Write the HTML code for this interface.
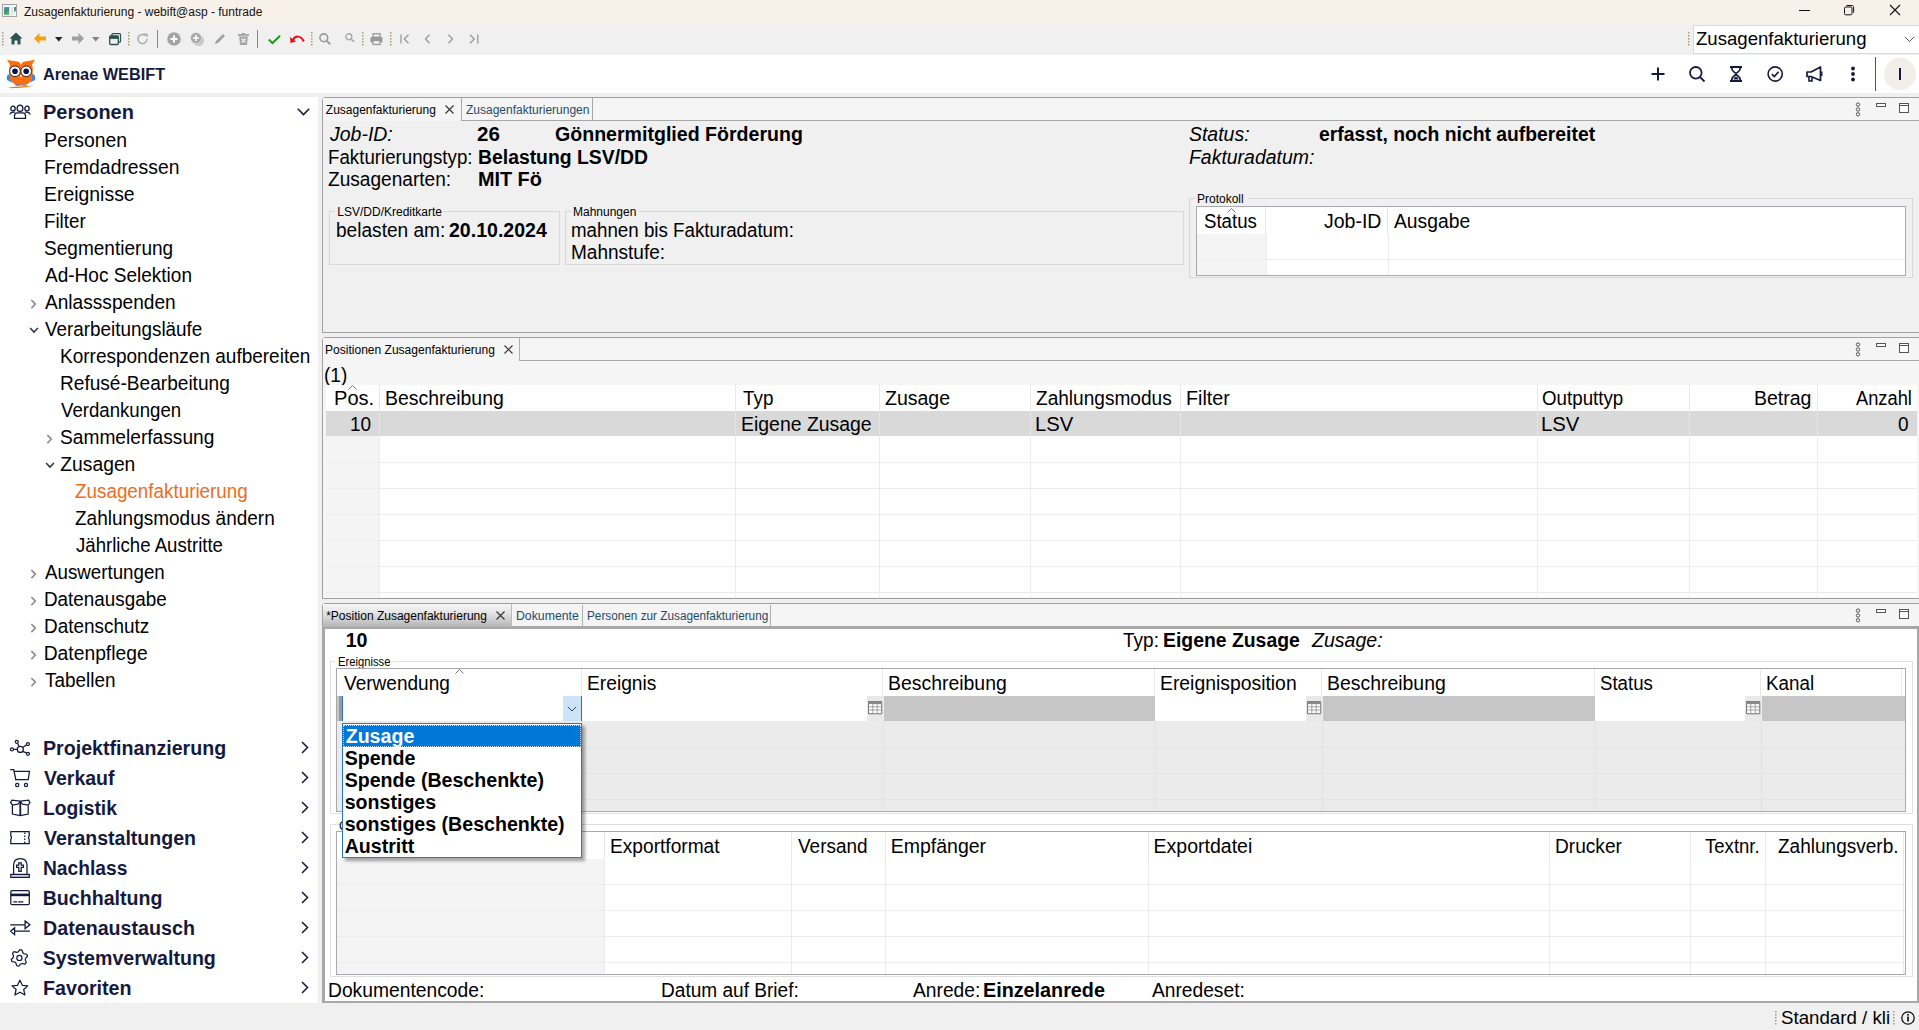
<!DOCTYPE html>
<html><head><meta charset="utf-8"><title>Zusagenfakturierung</title>
<style>
html,body{margin:0;padding:0;width:1919px;height:1030px;overflow:hidden;background:#f0f0f0;font-family:"Liberation Sans",sans-serif;}
.r{position:absolute;box-sizing:border-box;}
svg.r{overflow:visible;}
.t{position:absolute;white-space:nowrap;}
</style></head><body>
<div class="r" style="left:0px;top:0px;width:1919px;height:23px;background:#f8f1ea"></div>
<svg class="r" style="left:2px;top:4px;" width="15" height="13" viewBox="0 0 15 13"><defs><linearGradient id="ig" x1="0" y1="0" x2="0.4" y2="1"><stop offset="0" stop-color="#6d93c4"/><stop offset="0.5" stop-color="#3f8a86"/><stop offset="1" stop-color="#5cb060"/></linearGradient></defs><rect x="0.5" y="0.5" width="14" height="12" fill="#f6f7f9" stroke="#9ea3aa"/><rect x="2" y="3" width="5.2" height="7.8" fill="url(#ig)"/><rect x="9" y="3" width="2.2" height="7.8" fill="#e2e2e2"/><rect x="12" y="3" width="2" height="4.5" fill="url(#ig)"/></svg>
<div class="t" style="left:24.00px;top:6.00px;font-size:12.0px;line-height:12.0px;color:#111;">Zusagenfakturierung - webift@asp - funtrade</div>
<div class="r" style="left:1799px;top:10px;width:11px;height:1px;background:#111"></div>
<svg class="r" style="left:1843px;top:4px;" width="12" height="12" viewBox="0 0 12 12"><rect x="1.5" y="3" width="7.5" height="7.8" rx="1.2" fill="none" stroke="#111"/><path d="M3.6 1.5 H9 C10 1.5 10.6 2.2 10.6 3.2 V8.6" fill="none" stroke="#111"/></svg>
<svg class="r" style="left:1889px;top:4px;" width="12" height="12" viewBox="0 0 12 12"><path d="M1 1 L11 11 M11 1 L1 11" stroke="#111" stroke-width="1.1"/></svg>
<div class="r" style="left:0px;top:23px;width:1919px;height:32px;background:#f0f0f0"></div>
<svg class="r" style="left:2px;top:32px;" width="2" height="14" viewBox="0 0 2 14"><rect x="0" y="0" width="1.5" height="1.5" fill="#a89878"/><rect x="0" y="3" width="1.5" height="1.5" fill="#a89878"/><rect x="0" y="6" width="1.5" height="1.5" fill="#a89878"/><rect x="0" y="9" width="1.5" height="1.5" fill="#a89878"/><rect x="0" y="12" width="1.5" height="1.5" fill="#a89878"/></svg>
<svg class="r" style="left:9px;top:32px;" width="14" height="13" viewBox="0 0 14 13"><path d="M7 0.5 L13.5 6.5 L11.5 6.5 L11.5 12.5 L8.5 12.5 L8.5 8.5 L5.5 8.5 L5.5 12.5 L2.5 12.5 L2.5 6.5 L0.5 6.5 Z" fill="#2f5252"/></svg>
<svg class="r" style="left:34px;top:33px;" width="12" height="11" viewBox="0 0 12 11"><path d="M0 5.5 L5.5 0 L5.5 3.5 L12 3.5 L12 7.5 L5.5 7.5 L5.5 11 Z" fill="#f5a012"/></svg>
<svg class="r" style="left:55px;top:37px;" width="8" height="5" viewBox="0 0 8 5"><path d="M0 0 H7.5 L3.75 4.5 Z" fill="#222"/></svg>
<svg class="r" style="left:72px;top:33px;" width="12" height="11" viewBox="0 0 12 11"><path d="M12 5.5 L6.5 0 L6.5 3.5 L0 3.5 L0 7.5 L6.5 7.5 L6.5 11 Z" fill="#a0a0a0"/></svg>
<svg class="r" style="left:92px;top:37px;" width="8" height="5" viewBox="0 0 8 5"><path d="M0 0 H7.5 L3.75 4.5 Z" fill="#808080"/></svg>
<svg class="r" style="left:109px;top:33px;" width="14" height="14" viewBox="0 0 14 14"><rect x="2.9" y="0.6" width="8.6" height="8.6" rx="1" fill="none" stroke="#2f4f4f" stroke-width="1.2"/><rect x="0.7" y="2.9" width="8.6" height="8.6" rx="1" fill="#f0f0f0" stroke="#2f4f4f" stroke-width="1.3"/><rect x="0.7" y="2.9" width="8.6" height="3" fill="#2f4f4f"/></svg>
<svg class="r" style="left:128px;top:32px;" width="2" height="14" viewBox="0 0 2 14"><rect x="0" y="0" width="1.5" height="1.5" fill="#a89878"/><rect x="0" y="3" width="1.5" height="1.5" fill="#a89878"/><rect x="0" y="6" width="1.5" height="1.5" fill="#a89878"/><rect x="0" y="9" width="1.5" height="1.5" fill="#a89878"/><rect x="0" y="12" width="1.5" height="1.5" fill="#a89878"/></svg>
<svg class="r" style="left:137px;top:33px;" width="12" height="12" viewBox="0 0 12 12"><path d="M10 6 A4.5 4.5 0 1 1 8.2 2.4" fill="none" stroke="#a8a8a8" stroke-width="1.5"/><path d="M6.5 0.5 L10.5 0.5 L10.5 4.5 Z" fill="#a8a8a8"/></svg>
<div class="r" style="left:157px;top:30px;width:1px;height:18px;background:#888"></div>
<svg class="r" style="left:167px;top:32px;" width="14" height="14" viewBox="0 0 14 14"><circle cx="7" cy="7" r="6.8" fill="#a4a4a4"/><path d="M7 3.5 V10.5 M3.5 7 H10.5" stroke="#fff" stroke-width="2"/></svg>
<svg class="r" style="left:190px;top:32px;" width="14" height="14" viewBox="0 0 14 14"><circle cx="8.5" cy="8.5" r="5.5" fill="#c8c8c8"/><circle cx="6" cy="6" r="5.5" fill="#a8a8a8" stroke="#f0f0f0" stroke-width="0.6"/><path d="M6 3 V9 M3 6 H9" stroke="#fff" stroke-width="1.6"/></svg>
<svg class="r" style="left:214px;top:33px;" width="12" height="12" viewBox="0 0 12 12"><path d="M1 11 L2 8 L9 1 L11 3 L4 10 Z" fill="#a0a0a0"/></svg>
<svg class="r" style="left:238px;top:33px;" width="11" height="12" viewBox="0 0 11 12"><rect x="0" y="1" width="11" height="1.8" fill="#a4a4a4"/><rect x="4" y="0" width="3" height="1.5" fill="#a4a4a4"/><path d="M1.2 3.5 H9.8 L9 12 H2 Z" fill="#a4a4a4"/><path d="M3.5 5.5 L7.5 9.5 M7.5 5.5 L3.5 9.5" stroke="#f0f0f0" stroke-width="1.2"/></svg>
<div class="r" style="left:257px;top:30px;width:1px;height:18px;background:#888"></div>
<svg class="r" style="left:268px;top:35px;" width="13" height="9" viewBox="0 0 13 9"><path d="M0.8 4.5 L4.5 8 L12 0.8" fill="none" stroke="#1e9a1e" stroke-width="2"/></svg>
<svg class="r" style="left:290px;top:34px;" width="15" height="10" viewBox="0 0 15 10"><path d="M3 6 C5 1.5 11 1 13.8 7.5" fill="none" stroke="#e81010" stroke-width="2"/><path d="M0 3 L0.5 9 L6 7.5 Z" fill="#e81010"/></svg>
<svg class="r" style="left:311px;top:32px;" width="2" height="14" viewBox="0 0 2 14"><rect x="0" y="0" width="1.5" height="1.5" fill="#a89878"/><rect x="0" y="3" width="1.5" height="1.5" fill="#a89878"/><rect x="0" y="6" width="1.5" height="1.5" fill="#a89878"/><rect x="0" y="9" width="1.5" height="1.5" fill="#a89878"/><rect x="0" y="12" width="1.5" height="1.5" fill="#a89878"/></svg>
<svg class="r" style="left:319px;top:33px;" width="12" height="12" viewBox="0 0 12 12"><circle cx="4.8" cy="4.8" r="3.9" fill="none" stroke="#999" stroke-width="1.6"/><path d="M7.6 7.6 L11.3 11.3" stroke="#999" stroke-width="1.8"/></svg>
<svg class="r" style="left:345px;top:33px;" width="10" height="9" viewBox="0 0 10 9"><circle cx="3.8" cy="3.8" r="3" fill="none" stroke="#aaa" stroke-width="1.4"/><path d="M6 6 L9.3 8.8" stroke="#aaa" stroke-width="1.6"/></svg>
<svg class="r" style="left:362px;top:32px;" width="2" height="14" viewBox="0 0 2 14"><rect x="0" y="0" width="1.5" height="1.5" fill="#a89878"/><rect x="0" y="3" width="1.5" height="1.5" fill="#a89878"/><rect x="0" y="6" width="1.5" height="1.5" fill="#a89878"/><rect x="0" y="9" width="1.5" height="1.5" fill="#a89878"/><rect x="0" y="12" width="1.5" height="1.5" fill="#a89878"/></svg>
<svg class="r" style="left:370px;top:33px;" width="13" height="12" viewBox="0 0 13 12"><rect x="3" y="0.7" width="7" height="3.5" fill="none" stroke="#999" stroke-width="1.3"/><rect x="0.5" y="4" width="12" height="5.5" rx="1" fill="#999"/><rect x="3" y="7.5" width="7" height="4" fill="#f0f0f0" stroke="#999" stroke-width="1.3"/></svg>
<svg class="r" style="left:390px;top:32px;" width="2" height="14" viewBox="0 0 2 14"><rect x="0" y="0" width="1.5" height="1.5" fill="#a89878"/><rect x="0" y="3" width="1.5" height="1.5" fill="#a89878"/><rect x="0" y="6" width="1.5" height="1.5" fill="#a89878"/><rect x="0" y="9" width="1.5" height="1.5" fill="#a89878"/><rect x="0" y="12" width="1.5" height="1.5" fill="#a89878"/></svg>
<svg class="r" style="left:400px;top:34px;" width="10" height="10" viewBox="0 0 10 10"><path d="M1 0.5 V9.5" stroke="#999" stroke-width="1.3"/><path d="M8.5 0.8 L4.2 5 L8.5 9.2" fill="none" stroke="#999" stroke-width="1.3"/></svg>
<svg class="r" style="left:424px;top:34px;" width="7" height="10" viewBox="0 0 7 10"><path d="M5.5 0.8 L1.5 5 L5.5 9.2" fill="none" stroke="#999" stroke-width="1.3"/></svg>
<svg class="r" style="left:447px;top:34px;" width="7" height="10" viewBox="0 0 7 10"><path d="M1.5 0.8 L5.5 5 L1.5 9.2" fill="none" stroke="#999" stroke-width="1.3"/></svg>
<svg class="r" style="left:469px;top:34px;" width="10" height="10" viewBox="0 0 10 10"><path d="M8.8 0.5 V9.5" stroke="#999" stroke-width="1.3"/><path d="M1 0.8 L5.2 5 L1 9.2" fill="none" stroke="#999" stroke-width="1.3"/></svg>
<svg class="r" style="left:1688px;top:32px;" width="2" height="15" viewBox="0 0 2 15"><rect x="0" y="0" width="1.5" height="1.5" fill="#a89878"/><rect x="0" y="3" width="1.5" height="1.5" fill="#a89878"/><rect x="0" y="6" width="1.5" height="1.5" fill="#a89878"/><rect x="0" y="9" width="1.5" height="1.5" fill="#a89878"/><rect x="0" y="12" width="1.5" height="1.5" fill="#a89878"/></svg>
<div class="r" style="left:1693px;top:25px;width:226px;height:29px;background:#fff;border:1px solid #d9d9d9;border-right:none"></div>
<div class="t" style="left:1696.00px;top:30.00px;font-size:18.6px;line-height:18.6px;">Zusagenfakturierung</div>
<svg class="r" style="left:1904px;top:36px;" width="11" height="7" viewBox="0 0 11 7"><path d="M0.8 0.8 L5.5 5.5 L10.2 0.8" fill="none" stroke="#555" stroke-width="1"/></svg>
<div class="r" style="left:0px;top:55px;width:1919px;height:38px;background:#fff"></div>
<svg class="r" style="left:5px;top:58px;" width="32" height="32" viewBox="0 0 32 32">
<path d="M2 22 C1 18 3 16 5 16 C5 20 6 23 8 25 Z" fill="#3c86e8"/>
<path d="M30 22 C31 18 29 16 27 16 C27 20 26 23 24 25 Z" fill="#3c86e8"/>
<path d="M2 1.8 C5 2.5 9 3.2 12 3.4 C14 3.5 15.5 5 16 7 C16.5 5 18 3.5 20 3.4 C23 3.2 27 2.5 30 1.8 C29 3.5 28 5 27 6.5 C28 9 28 13 27.5 17 C27 22 24 26 20 27.5 L12 27.5 C8 26 5 22 4.5 17 C4 13 4 9 5 6.5 C4 5 3 3.5 2 1.8 Z" fill="#fb6e09"/>
<circle cx="10" cy="13.3" r="5.3" fill="#fff" stroke="#1a1a3a" stroke-width="0.9"/>
<circle cx="21.2" cy="13.3" r="5.3" fill="#fff" stroke="#1a1a3a" stroke-width="0.9"/>
<circle cx="10" cy="13.3" r="2.8" fill="#0d1240"/>
<circle cx="21.2" cy="13.3" r="2.8" fill="#0d1240"/>
<path d="M15 17 L17 17 L16 20.5 Z" fill="#fff"/>
<path d="M2.5 30 C8 28.5 20 28.2 29 27.5 C22 29.5 10 30.5 2.5 30 Z" fill="#fb6e09"/>
<rect x="10.5" y="26.3" width="4" height="1.5" fill="#4a90ee"/><rect x="17" y="26.3" width="4.5" height="1.5" fill="#6aa0ee"/>
</svg>
<div class="t" style="left:43.00px;top:66.00px;font-size:16.3px;line-height:16.3px;font-weight:bold;color:#151a3d;">Arenae WEBIFT</div>
<svg class="r" style="left:1651px;top:67px;" width="14" height="14" viewBox="0 0 14 14"><path d="M7 0.5 V13.5 M0.5 7 H13.5" stroke="#151a3d" stroke-width="2"/></svg>
<svg class="r" style="left:1689px;top:66px;" width="17" height="16" viewBox="0 0 17 16"><circle cx="6.8" cy="6.8" r="5.8" fill="none" stroke="#151a3d" stroke-width="1.8"/><path d="M11 11 L15.5 15.5" stroke="#151a3d" stroke-width="1.8"/></svg>
<svg class="r" style="left:1729px;top:66px;" width="14" height="16" viewBox="0 0 14 16"><path d="M1 1 H13 M1 15 H13" stroke="#151a3d" stroke-width="1.8"/><path d="M2.5 1 C2.5 6 7 6.5 7 8 C7 9.5 2.5 10 2.5 15 M11.5 1 C11.5 6 7 6.5 7 8 C7 9.5 11.5 10 11.5 15" fill="none" stroke="#151a3d" stroke-width="1.6"/><path d="M4.5 13.5 C4.5 11.5 7 10.5 7 10.5 C7 10.5 9.5 11.5 9.5 13.5 Z" fill="#151a3d"/></svg>
<svg class="r" style="left:1767px;top:66px;" width="17" height="16" viewBox="0 0 17 16"><circle cx="8.2" cy="8" r="7.1" fill="none" stroke="#151a3d" stroke-width="1.6"/><path d="M4.8 8.2 L7.3 10.6 L11.6 5.8" fill="none" stroke="#151a3d" stroke-width="1.7"/></svg>
<svg class="r" style="left:1806px;top:66px;" width="17" height="16" viewBox="0 0 17 16"><path d="M1 6 H5 L14.5 1 V14.5 L5 10.5 H1 Z" fill="none" stroke="#151a3d" stroke-width="1.7" stroke-linejoin="round"/><path d="M3 10.5 V15 H6 V11.5" fill="none" stroke="#151a3d" stroke-width="1.6"/><path d="M15.8 5.5 V10" stroke="#151a3d" stroke-width="1.4"/></svg>
<svg class="r" style="left:1850px;top:66px;" width="6" height="16" viewBox="0 0 6 16"><circle cx="3" cy="2.5" r="1.9" fill="#151a3d"/><circle cx="3" cy="8" r="1.9" fill="#151a3d"/><circle cx="3" cy="13.5" r="1.9" fill="#151a3d"/></svg>
<div class="r" style="left:1875px;top:57px;width:1px;height:34px;background:#555"></div>
<div class="r" style="left:1884px;top:58px;width:32px;height:32px;background:#f2eee9;border-radius:50%"></div>
<div class="r" style="left:1899px;top:68px;width:2.4px;height:12px;background:#151a3d"></div>
<div class="r" style="left:0px;top:93px;width:1919px;height:4px;background:#efefef"></div>
<div class="r" style="left:0px;top:97px;width:318px;height:906px;background:#fff"></div>
<svg class="r" style="left:9px;top:104px;" width="22" height="16" viewBox="0 0 22 16"><g fill="none" stroke="#151a3d" stroke-width="1.3">
<ellipse cx="11" cy="4.3" rx="2.9" ry="3.2"/>
<ellipse cx="4" cy="4.5" rx="2.2" ry="2.3"/>
<ellipse cx="18" cy="4.5" rx="2.2" ry="2.3"/>
<path d="M5.5 14.3 V11.5 C5.5 9.8 7 8.8 8.5 8.8 L13.5 8.8 C15 8.8 16.5 9.8 16.5 11.5 V14.3 Z"/>
<path d="M1 10.5 C1.3 8.8 2.5 8.2 4.5 8.2 H6" />
<path d="M21 10.5 C20.7 8.8 19.5 8.2 17.5 8.2 H16" />
</g></svg>
<div class="t" style="left:42.68px;top:103.00px;font-size:19.6px;line-height:19.6px;font-weight:bold;color:#151a3d;transform:scaleX(1.0172);transform-origin:left 0;">Personen</div>
<svg class="r" style="left:297px;top:108px;" width="13" height="8" viewBox="0 0 13 8"><path d="M0.8 0.8 L6.5 6.5 L12.2 0.8" fill="none" stroke="#151a3d" stroke-width="1.6"/></svg>
<div class="t" style="left:43.69px;top:131.00px;font-size:19.3px;line-height:19.3px;transform:scaleX(1.0063);transform-origin:left 0;">Personen</div>
<div class="t" style="left:43.70px;top:158.00px;font-size:19.3px;line-height:19.3px;transform:scaleX(1.0030);transform-origin:left 0;">Fremdadressen</div>
<div class="t" style="left:43.69px;top:185.00px;font-size:19.3px;line-height:19.3px;transform:scaleX(1.0068);transform-origin:left 0;">Ereignisse</div>
<div class="t" style="left:43.73px;top:212.00px;font-size:19.3px;line-height:19.3px;transform:scaleX(0.9714);transform-origin:left 0;">Filter</div>
<div class="t" style="left:43.71px;top:239.00px;font-size:19.3px;line-height:19.3px;transform:scaleX(0.9876);transform-origin:left 0;">Segmentierung</div>
<div class="t" style="left:44.70px;top:266.00px;font-size:19.3px;line-height:19.3px;transform:scaleX(0.9865);transform-origin:left 0;">Ad-Hoc Selektion</div>
<div class="t" style="left:44.70px;top:293.00px;font-size:19.3px;line-height:19.3px;transform:scaleX(0.9908);transform-origin:left 0;">Anlassspenden</div>
<svg class="r" style="left:29.5px;top:298.5px;" width="8" height="11" viewBox="0 0 8 11"><path d="M1.4 1.1 L5.4 5.1 L1.4 9.1" fill="none" stroke="#8a8a8a" stroke-width="1.5"/></svg>
<div class="t" style="left:44.70px;top:320.00px;font-size:19.3px;line-height:19.3px;transform:scaleX(0.9781);transform-origin:left 0;">Verarbeitungsläufe</div>
<svg class="r" style="left:28.5px;top:326.5px;" width="11" height="8" viewBox="0 0 11 8"><path d="M1.1 1.1 L5 5.1 L8.9 1.1" fill="none" stroke="#333" stroke-width="1.5"/></svg>
<div class="t" style="left:60.31px;top:347.00px;font-size:19.3px;line-height:19.3px;transform:scaleX(0.9853);transform-origin:left 0;">Korrespondenzen aufbereiten</div>
<div class="t" style="left:60.31px;top:374.00px;font-size:19.3px;line-height:19.3px;transform:scaleX(0.9899);transform-origin:left 0;">Refusé-Bearbeitung</div>
<div class="t" style="left:61.30px;top:401.00px;font-size:19.3px;line-height:19.3px;transform:scaleX(0.9659);transform-origin:left 0;">Verdankungen</div>
<div class="t" style="left:60.31px;top:428.00px;font-size:19.3px;line-height:19.3px;transform:scaleX(0.9935);transform-origin:left 0;">Sammelerfassung</div>
<svg class="r" style="left:45.5px;top:433.5px;" width="8" height="11" viewBox="0 0 8 11"><path d="M1.4 1.1 L5.4 5.1 L1.4 9.1" fill="none" stroke="#8a8a8a" stroke-width="1.5"/></svg>
<div class="t" style="left:60.30px;top:455.00px;font-size:19.3px;line-height:19.3px;">Zusagen</div>
<svg class="r" style="left:44.5px;top:461.5px;" width="11" height="8" viewBox="0 0 11 8"><path d="M1.1 1.1 L5 5.1 L8.9 1.1" fill="none" stroke="#333" stroke-width="1.5"/></svg>
<div class="t" style="left:75.22px;top:482.00px;font-size:19.3px;line-height:19.3px;color:#f26b1d;transform:scaleX(0.9771);transform-origin:left 0;">Zusagenfakturierung</div>
<div class="t" style="left:75.21px;top:509.00px;font-size:19.3px;line-height:19.3px;transform:scaleX(0.9860);transform-origin:left 0;">Zahlungsmodus ändern</div>
<div class="t" style="left:76.20px;top:536.00px;font-size:19.3px;line-height:19.3px;transform:scaleX(0.9658);transform-origin:left 0;">Jährliche Austritte</div>
<div class="t" style="left:44.70px;top:563.00px;font-size:19.3px;line-height:19.3px;transform:scaleX(0.9713);transform-origin:left 0;">Auswertungen</div>
<svg class="r" style="left:29.5px;top:568.5px;" width="8" height="11" viewBox="0 0 8 11"><path d="M1.4 1.1 L5.4 5.1 L1.4 9.1" fill="none" stroke="#8a8a8a" stroke-width="1.5"/></svg>
<div class="t" style="left:43.72px;top:590.00px;font-size:19.3px;line-height:19.3px;transform:scaleX(0.9782);transform-origin:left 0;">Datenausgabe</div>
<svg class="r" style="left:29.5px;top:595.5px;" width="8" height="11" viewBox="0 0 8 11"><path d="M1.4 1.1 L5.4 5.1 L1.4 9.1" fill="none" stroke="#8a8a8a" stroke-width="1.5"/></svg>
<div class="t" style="left:43.72px;top:617.00px;font-size:19.3px;line-height:19.3px;transform:scaleX(0.9829);transform-origin:left 0;">Datenschutz</div>
<svg class="r" style="left:29.5px;top:622.5px;" width="8" height="11" viewBox="0 0 8 11"><path d="M1.4 1.1 L5.4 5.1 L1.4 9.1" fill="none" stroke="#8a8a8a" stroke-width="1.5"/></svg>
<div class="t" style="left:43.70px;top:644.00px;font-size:19.3px;line-height:19.3px;">Datenpflege</div>
<svg class="r" style="left:29.5px;top:649.5px;" width="8" height="11" viewBox="0 0 8 11"><path d="M1.4 1.1 L5.4 5.1 L1.4 9.1" fill="none" stroke="#8a8a8a" stroke-width="1.5"/></svg>
<div class="t" style="left:44.70px;top:671.00px;font-size:19.3px;line-height:19.3px;transform:scaleX(0.9803);transform-origin:left 0;">Tabellen</div>
<svg class="r" style="left:29.5px;top:676.5px;" width="8" height="11" viewBox="0 0 8 11"><path d="M1.4 1.1 L5.4 5.1 L1.4 9.1" fill="none" stroke="#8a8a8a" stroke-width="1.5"/></svg>
<div class="t" style="left:42.70px;top:739.00px;font-size:19.6px;line-height:19.6px;font-weight:bold;color:#151a3d;transform:scaleX(1.0017);transform-origin:left 0;">Projektfinanzierung</div>
<svg class="r" style="left:301px;top:741px;" width="8" height="13" viewBox="0 0 8 13"><path d="M1 1 L6.5 6.5 L1 12" fill="none" stroke="#151a3d" stroke-width="1.5"/></svg>
<div class="t" style="left:43.70px;top:769.00px;font-size:19.6px;line-height:19.6px;font-weight:bold;color:#151a3d;transform:scaleX(0.9958);transform-origin:left 0;">Verkauf</div>
<svg class="r" style="left:301px;top:771px;" width="8" height="13" viewBox="0 0 8 13"><path d="M1 1 L6.5 6.5 L1 12" fill="none" stroke="#151a3d" stroke-width="1.5"/></svg>
<div class="t" style="left:42.72px;top:799.00px;font-size:19.6px;line-height:19.6px;font-weight:bold;color:#151a3d;transform:scaleX(0.9838);transform-origin:left 0;">Logistik</div>
<svg class="r" style="left:301px;top:801px;" width="8" height="13" viewBox="0 0 8 13"><path d="M1 1 L6.5 6.5 L1 12" fill="none" stroke="#151a3d" stroke-width="1.5"/></svg>
<div class="t" style="left:43.70px;top:829.00px;font-size:19.6px;line-height:19.6px;font-weight:bold;color:#151a3d;transform:scaleX(0.9967);transform-origin:left 0;">Veranstaltungen</div>
<svg class="r" style="left:301px;top:831px;" width="8" height="13" viewBox="0 0 8 13"><path d="M1 1 L6.5 6.5 L1 12" fill="none" stroke="#151a3d" stroke-width="1.5"/></svg>
<div class="t" style="left:42.72px;top:859.00px;font-size:19.6px;line-height:19.6px;font-weight:bold;color:#151a3d;transform:scaleX(0.9800);transform-origin:left 0;">Nachlass</div>
<svg class="r" style="left:301px;top:861px;" width="8" height="13" viewBox="0 0 8 13"><path d="M1 1 L6.5 6.5 L1 12" fill="none" stroke="#151a3d" stroke-width="1.5"/></svg>
<div class="t" style="left:42.70px;top:889.00px;font-size:19.6px;line-height:19.6px;font-weight:bold;color:#151a3d;">Buchhaltung</div>
<svg class="r" style="left:301px;top:891px;" width="8" height="13" viewBox="0 0 8 13"><path d="M1 1 L6.5 6.5 L1 12" fill="none" stroke="#151a3d" stroke-width="1.5"/></svg>
<div class="t" style="left:42.70px;top:919.00px;font-size:19.6px;line-height:19.6px;font-weight:bold;color:#151a3d;transform:scaleX(1.0040);transform-origin:left 0;">Datenaustausch</div>
<svg class="r" style="left:301px;top:921px;" width="8" height="13" viewBox="0 0 8 13"><path d="M1 1 L6.5 6.5 L1 12" fill="none" stroke="#151a3d" stroke-width="1.5"/></svg>
<div class="t" style="left:42.70px;top:949.00px;font-size:19.6px;line-height:19.6px;font-weight:bold;color:#151a3d;">Systemverwaltung</div>
<svg class="r" style="left:301px;top:951px;" width="8" height="13" viewBox="0 0 8 13"><path d="M1 1 L6.5 6.5 L1 12" fill="none" stroke="#151a3d" stroke-width="1.5"/></svg>
<div class="t" style="left:42.70px;top:979.00px;font-size:19.6px;line-height:19.6px;font-weight:bold;color:#151a3d;transform:scaleX(1.0035);transform-origin:left 0;">Favoriten</div>
<svg class="r" style="left:301px;top:981px;" width="8" height="13" viewBox="0 0 8 13"><path d="M1 1 L6.5 6.5 L1 12" fill="none" stroke="#151a3d" stroke-width="1.5"/></svg>
<svg class="r" style="left:10px;top:738px;" width="21" height="20" viewBox="0 0 21 20"><g fill="none" stroke="#151a3d" stroke-width="1.25"><circle cx="2" cy="11.4" r="1.5"/><circle cx="10.3" cy="11.4" r="3"/><circle cx="6.8" cy="3.8" r="1.5"/><circle cx="17.9" cy="6" r="1.5"/><circle cx="17.9" cy="15.8" r="1.5"/><path d="M3.6 11.4 H7.2 M7.6 5.2 L9 8.5 M12.8 9.5 L16.5 6.8 M12.6 13.3 L16.6 14.9"/></g></svg>
<svg class="r" style="left:10px;top:768px;" width="21" height="20" viewBox="0 0 21 20"><g fill="none" stroke="#151a3d" stroke-width="1.25"><path d="M0.2 1.6 H3.7 L6 12.5 M4.2 3.3 H19.5 L18.2 11.6 H6"/><circle cx="7.2" cy="16.9" r="1.6"/><circle cx="16" cy="16.9" r="1.6"/></g></svg>
<svg class="r" style="left:10px;top:798px;" width="21" height="20" viewBox="0 0 21 20"><g fill="none" stroke="#151a3d" stroke-width="1.25"><path d="M2.4 7 V16 L10.3 17.5 L18.2 16 V7 M0.5 4.5 L2 2.2 L10.3 3.2 L18.6 2.2 L20 4.5 L18.2 7 L12.5 6.2 L10.3 3.6 L8 6.2 L2.4 7 Z"/></g><path d="M10.3 3.6 V17.5" stroke="#151a3d" stroke-width="1.8"/></svg>
<svg class="r" style="left:10px;top:828px;" width="21" height="20" viewBox="0 0 21 20"><g fill="none" stroke="#151a3d" stroke-width="1.25"><path d="M0.8 3.5 H19.2 V8 C18.3 8.6 18.3 10.6 19.2 11.3 V15.6 H0.8 V11.3 C1.7 10.6 1.7 8.6 0.8 8 Z"/><path d="M14.7 4.5 V15" stroke-dasharray="1.5 1.5"/></g></svg>
<svg class="r" style="left:10px;top:858px;" width="21" height="20" viewBox="0 0 21 20"><g fill="none" stroke="#151a3d" stroke-width="1.25"><path d="M3.6 16.4 V7.5 C3.6 3 6.5 0.7 10.3 0.7 C14.1 0.7 17 3 17 7.5 V16.4"/><rect x="0.8" y="16.4" width="18.5" height="3" fill="#d4d6e0"/><path d="M8.8 4.8 H11.2 V7.2 H13.4 V9.4 H11.2 V13.4 H8.8 V9.4 H6.6 V7.2 H8.8 Z"/></g></svg>
<svg class="r" style="left:10px;top:888px;" width="21" height="20" viewBox="0 0 21 20"><g fill="none" stroke="#151a3d" stroke-width="1.25"><rect x="0.8" y="2.6" width="18.5" height="14" rx="1.2"/><path d="M3.3 13.8 H7.2 M8.1 13.8 H13.4"/></g><rect x="0.8" y="5.6" width="18.5" height="2.6" fill="#151a3d"/></svg>
<svg class="r" style="left:10px;top:918px;" width="21" height="20" viewBox="0 0 21 20"><g fill="none" stroke="#151a3d" stroke-width="1.25"><path d="M0.25 6.8 H15.1 M15.1 3.1 L19.9 6.8 L15.1 10.6 Z M19.9 13.2 H4.6 M4.6 9.7 L0.6 13.2 L4.6 16.7 Z"/></g></svg>
<svg class="r" style="left:10px;top:948px;" width="21" height="20" viewBox="0 0 21 20"><g fill="none" stroke="#151a3d" stroke-width="1.2" stroke-linejoin="round"><path d="M9.94 1.62 L12.07 2.04 L12.84 4.74 L14.06 5.81 L16.84 6.23 L17.54 8.28 L15.59 10.31 L15.27 11.89 L16.30 14.51 L14.87 16.14 L12.14 15.46 L10.61 15.98 L8.86 18.18 L6.73 17.76 L5.96 15.06 L4.74 13.99 L1.96 13.57 L1.26 11.52 L3.21 9.49 L3.53 7.91 L2.50 5.29 L3.93 3.66 L6.66 4.34 L8.19 3.82 Z"/><circle cx="9.4" cy="9.9" r="2.6"/></g></svg>
<svg class="r" style="left:10px;top:978px;" width="21" height="20" viewBox="0 0 21 20"><g fill="none" stroke="#151a3d" stroke-width="1.25" stroke-linejoin="round"><path d="M9.9 2.2 L12.3 7.3 L17.8 7.9 L13.7 11.5 L14.9 17 L9.9 14.2 L4.9 17 L6.1 11.5 L2 7.9 L7.5 7.3 Z"/></g></svg>
<div class="r" style="left:322px;top:97px;width:1597px;height:236px;background:#f0f0f0;border:1px solid #a0a0a0;border-right:none;border-top-left-radius:4px"></div>
<div class="r" style="left:323px;top:98px;width:1596px;height:22px;background:#f5f5f5"></div>
<div class="r" style="left:323px;top:120px;width:1596px;height:1px;background:#a8a8a8"></div>
<div class="r" style="left:323px;top:98px;width:139px;height:23px;background:#f5f5f5;border-right:1px solid #a8a8a8"></div>
<div class="t" style="left:325.80px;top:104.00px;font-size:12.0px;line-height:12.0px;">Zusagenfakturierung</div>
<svg class="r" style="left:445px;top:105px;" width="9" height="9" viewBox="0 0 9 9"><path d="M0.5 0.5 L8.5 8.5 M8.5 0.5 L0.5 8.5" stroke="#333" stroke-width="1.1"/></svg>
<div class="r" style="left:462px;top:98px;width:131px;height:22px;background:#f5f5f5;border-right:1px solid #a8a8a8"></div>
<div class="t" style="left:466.00px;top:104.00px;font-size:12.0px;line-height:12.0px;color:#1f4b68;">Zusagenfakturierungen</div>
<svg class="r" style="left:1855px;top:102px;" width="6" height="15" viewBox="0 0 6 15"><g fill="none" stroke="#555" stroke-width="1"><circle cx="3" cy="2.6" r="1.7"/><circle cx="3" cy="7.5" r="1.7"/><circle cx="3" cy="12.3" r="1.7"/></g></svg>
<div class="r" style="left:1876px;top:103px;width:10px;height:4px;border:1px solid #555;background:#fff"></div>
<svg class="r" style="left:1899px;top:103px;" width="11" height="11" viewBox="0 0 11 11"><rect x="0.5" y="0.5" width="9" height="9" fill="#fff" stroke="#555"/><path d="M0.5 2.5 H9.5" stroke="#555"/></svg>
<div class="r" style="left:323px;top:121px;width:1596px;height:211px;background:#f0f0f0"></div>
<div class="t" style="left:329.50px;top:125.00px;font-size:19.3px;line-height:19.3px;font-style:italic;transform:scaleX(1.0098);transform-origin:left 0;">Job-ID:</div>
<div class="t" style="left:477.45px;top:125.00px;font-size:19.6px;line-height:19.6px;font-weight:bold;transform:scaleX(1.0500);transform-origin:left 0;">26</div>
<div class="t" style="left:554.80px;top:125.00px;font-size:19.6px;line-height:19.6px;font-weight:bold;transform:scaleX(0.9988);transform-origin:left 0;">Gönnermitglied Förderung</div>
<div class="t" style="left:328.28px;top:148.00px;font-size:19.5px;line-height:19.5px;transform:scaleX(0.9592);transform-origin:left 0;">Fakturierungstyp:</div>
<div class="t" style="left:477.91px;top:148.00px;font-size:19.6px;line-height:19.6px;font-weight:bold;transform:scaleX(0.9882);transform-origin:left 0;">Belastung LSV/DD</div>
<div class="t" style="left:328.22px;top:170.00px;font-size:19.5px;line-height:19.5px;transform:scaleX(0.9789);transform-origin:left 0;">Zusagenarten:</div>
<div class="t" style="left:477.79px;top:170.00px;font-size:19.6px;line-height:19.6px;font-weight:bold;transform:scaleX(1.0113);transform-origin:left 0;">MIT Fö</div>
<div class="t" style="left:1189.49px;top:125.00px;font-size:19.3px;line-height:19.3px;font-style:italic;transform:scaleX(1.0086);transform-origin:left 0;">Status:</div>
<div class="t" style="left:1319.31px;top:125.00px;font-size:19.6px;line-height:19.6px;font-weight:bold;transform:scaleX(0.9867);transform-origin:left 0;">erfasst, noch nicht aufbereitet</div>
<div class="t" style="left:1188.99px;top:148.00px;font-size:19.3px;line-height:19.3px;font-style:italic;transform:scaleX(1.0081);transform-origin:left 0;">Fakturadatum:</div>
<div class="r" style="left:329px;top:211px;width:231px;height:54px;border:1px solid #d8d8d8"></div>
<div class="r" style="left:335.3px;top:210px;width:108px;height:3px;background:#f0f0f0"></div>
<div class="t" style="left:337.30px;top:206.00px;font-size:12.0px;line-height:12.0px;">LSV/DD/Kreditkarte</div>
<div class="t" style="left:335.62px;top:221.00px;font-size:19.5px;line-height:19.5px;transform:scaleX(0.9789);transform-origin:left 0;">belasten am:</div>
<div class="t" style="left:448.70px;top:221.00px;font-size:19.6px;line-height:19.6px;font-weight:bold;transform:scaleX(0.9969);transform-origin:left 0;">20.10.2024</div>
<div class="r" style="left:565px;top:211px;width:619px;height:54px;border:1px solid #d8d8d8"></div>
<div class="r" style="left:571px;top:210px;width:68px;height:3px;background:#f0f0f0"></div>
<div class="t" style="left:573.00px;top:206.00px;font-size:12.0px;line-height:12.0px;">Mahnungen</div>
<div class="t" style="left:571.24px;top:221.00px;font-size:19.5px;line-height:19.5px;transform:scaleX(0.9607);transform-origin:left 0;">mahnen bis Fakturadatum:</div>
<div class="t" style="left:570.75px;top:243.00px;font-size:19.5px;line-height:19.5px;transform:scaleX(0.9753);transform-origin:left 0;">Mahnstufe:</div>
<div class="r" style="left:1189px;top:198px;width:724px;height:80px;border:1px solid #d8d8d8"></div>
<div class="r" style="left:1195px;top:197px;width:54px;height:3px;background:#f0f0f0"></div>
<div class="t" style="left:1197.00px;top:193.00px;font-size:12.0px;line-height:12.0px;">Protokoll</div>
<div class="r" style="left:1196px;top:206px;width:710px;height:70px;background:#fff;border:1px solid #a8a8b0"></div>
<div class="r" style="left:1197px;top:234px;width:69px;height:41px;background:#f4f4f4"></div>
<div class="r" style="left:1265px;top:207px;width:1px;height:27px;background:#e8e8e8"></div>
<div class="r" style="left:1387px;top:207px;width:1px;height:27px;background:#e8e8e8"></div>
<div class="r" style="left:1266px;top:234px;width:1px;height:41px;background:#ececec"></div>
<div class="r" style="left:1388px;top:234px;width:1px;height:41px;background:#ececec"></div>
<div class="r" style="left:1197px;top:259px;width:708px;height:1px;background:#ececec"></div>
<div class="t" style="left:1203.74px;top:212.00px;font-size:19.5px;line-height:19.5px;transform:scaleX(0.9556);transform-origin:left 0;">Status</div>
<svg class="r" style="left:1227px;top:208px;" width="9" height="5" viewBox="0 0 9 5"><path d="M0.5 4.5 L4.5 0.5 L8.5 4.5" fill="none" stroke="#666" stroke-width="0.9"/></svg>
<div class="t" style="left:1324.00px;top:212.00px;font-size:19.5px;line-height:19.5px;">Job-ID</div>
<div class="t" style="left:1394.20px;top:212.00px;font-size:19.5px;line-height:19.5px;transform:scaleX(0.9895);transform-origin:left 0;">Ausgabe</div>
<div class="r" style="left:322px;top:337px;width:1597px;height:262px;background:#f5f5f5;border:1px solid #a0a0a0;border-right:none;border-top-left-radius:4px"></div>
<div class="r" style="left:323px;top:360px;width:1596px;height:1px;background:#a8a8a8"></div>
<div class="r" style="left:323px;top:338px;width:197px;height:23px;background:#f5f5f5;border-right:1px solid #b0b0b0"></div>
<div class="t" style="left:325.40px;top:344.00px;font-size:12.0px;line-height:12.0px;transform:scaleX(1.0030);transform-origin:left 0;">Positionen Zusagenfakturierung</div>
<svg class="r" style="left:504px;top:345px;" width="9" height="9" viewBox="0 0 9 9"><path d="M0.5 0.5 L8.5 8.5 M8.5 0.5 L0.5 8.5" stroke="#333" stroke-width="1.1"/></svg>
<svg class="r" style="left:1855px;top:342px;" width="6" height="15" viewBox="0 0 6 15"><g fill="none" stroke="#555" stroke-width="1"><circle cx="3" cy="2.6" r="1.7"/><circle cx="3" cy="7.5" r="1.7"/><circle cx="3" cy="12.3" r="1.7"/></g></svg>
<div class="r" style="left:1876px;top:343px;width:10px;height:4px;border:1px solid #555;background:#fff"></div>
<svg class="r" style="left:1899px;top:343px;" width="11" height="11" viewBox="0 0 11 11"><rect x="0.5" y="0.5" width="9" height="9" fill="#fff" stroke="#555"/><path d="M0.5 2.5 H9.5" stroke="#555"/></svg>
<div class="t" style="left:324.02px;top:366.00px;font-size:19.5px;line-height:19.5px;transform:scaleX(0.9750);transform-origin:left 0;">(1)</div>
<div class="r" style="left:326px;top:385px;width:1591px;height:26px;background:#fff"></div>
<div class="r" style="left:326px;top:411px;width:54px;height:186px;background:#f4f4f4"></div>
<div class="r" style="left:380px;top:411px;width:1537px;height:186px;background:#fff"></div>
<div class="r" style="left:326px;top:411px;width:1591px;height:25px;background:#d9d9d9"></div>
<div class="r" style="left:379px;top:385px;width:1px;height:26px;background:#e8e8e8"></div>
<div class="r" style="left:379px;top:436px;width:1px;height:161px;background:#ececec"></div>
<div class="r" style="left:735px;top:385px;width:1px;height:26px;background:#e8e8e8"></div>
<div class="r" style="left:735px;top:436px;width:1px;height:161px;background:#ececec"></div>
<div class="r" style="left:879px;top:385px;width:1px;height:26px;background:#e8e8e8"></div>
<div class="r" style="left:879px;top:436px;width:1px;height:161px;background:#ececec"></div>
<div class="r" style="left:1030px;top:385px;width:1px;height:26px;background:#e8e8e8"></div>
<div class="r" style="left:1030px;top:436px;width:1px;height:161px;background:#ececec"></div>
<div class="r" style="left:1180px;top:385px;width:1px;height:26px;background:#e8e8e8"></div>
<div class="r" style="left:1180px;top:436px;width:1px;height:161px;background:#ececec"></div>
<div class="r" style="left:1537px;top:385px;width:1px;height:26px;background:#e8e8e8"></div>
<div class="r" style="left:1537px;top:436px;width:1px;height:161px;background:#ececec"></div>
<div class="r" style="left:1689px;top:385px;width:1px;height:26px;background:#e8e8e8"></div>
<div class="r" style="left:1689px;top:436px;width:1px;height:161px;background:#ececec"></div>
<div class="r" style="left:1817px;top:385px;width:1px;height:26px;background:#e8e8e8"></div>
<div class="r" style="left:1817px;top:436px;width:1px;height:161px;background:#ececec"></div>
<div class="r" style="left:326px;top:462px;width:1591px;height:1px;background:#ececec"></div>
<div class="r" style="left:326px;top:488px;width:1591px;height:1px;background:#ececec"></div>
<div class="r" style="left:326px;top:514px;width:1591px;height:1px;background:#ececec"></div>
<div class="r" style="left:326px;top:540px;width:1591px;height:1px;background:#ececec"></div>
<div class="r" style="left:326px;top:566px;width:1591px;height:1px;background:#ececec"></div>
<div class="r" style="left:326px;top:592px;width:1591px;height:1px;background:#ececec"></div>
<div class="r" style="left:379px;top:411px;width:1px;height:25px;background:#e4e4e4"></div>
<div class="r" style="left:735px;top:411px;width:1px;height:25px;background:#e4e4e4"></div>
<div class="r" style="left:879px;top:411px;width:1px;height:25px;background:#e4e4e4"></div>
<div class="r" style="left:1030px;top:411px;width:1px;height:25px;background:#e4e4e4"></div>
<div class="r" style="left:1180px;top:411px;width:1px;height:25px;background:#e4e4e4"></div>
<div class="r" style="left:1537px;top:411px;width:1px;height:25px;background:#e4e4e4"></div>
<div class="r" style="left:1689px;top:411px;width:1px;height:25px;background:#e4e4e4"></div>
<div class="r" style="left:1817px;top:411px;width:1px;height:25px;background:#e4e4e4"></div>
<svg class="r" style="left:348px;top:385px;" width="9" height="5" viewBox="0 0 9 5"><path d="M0.5 4.5 L4.5 0.5 L8.5 4.5" fill="none" stroke="#666" stroke-width="0.9"/></svg>
<div class="t" style="left:334.44px;top:389.00px;font-size:19.5px;line-height:19.5px;transform:scaleX(1.0286);transform-origin:left 0;">Pos.</div>
<div class="t" style="left:384.51px;top:389.00px;font-size:19.5px;line-height:19.5px;transform:scaleX(0.9957);transform-origin:left 0;">Beschreibung</div>
<div class="t" style="left:742.50px;top:389.00px;font-size:19.5px;line-height:19.5px;transform:scaleX(0.9677);transform-origin:left 0;">Typ</div>
<div class="t" style="left:885.00px;top:389.00px;font-size:19.5px;line-height:19.5px;">Zusage</div>
<div class="t" style="left:1036.22px;top:389.00px;font-size:19.5px;line-height:19.5px;transform:scaleX(0.9781);transform-origin:left 0;">Zahlungsmodus</div>
<div class="t" style="left:1185.58px;top:389.00px;font-size:19.5px;line-height:19.5px;transform:scaleX(1.0122);transform-origin:left 0;">Filter</div>
<div class="t" style="left:1542.44px;top:389.00px;font-size:19.5px;line-height:19.5px;transform:scaleX(0.9614);transform-origin:left 0;">Outputtyp</div>
<div class="t" style="left:1754.00px;top:389.00px;font-size:19.5px;line-height:19.5px;">Betrag</div>
<div class="t" style="left:1855.50px;top:389.00px;font-size:19.5px;line-height:19.5px;transform:scaleX(0.9373);transform-origin:left 0;">Anzahl</div>
<div class="t" style="left:350.02px;top:415.00px;font-size:19.5px;line-height:19.5px;transform:scaleX(0.9750);transform-origin:left 0;">10</div>
<div class="t" style="left:740.51px;top:415.00px;font-size:19.5px;line-height:19.5px;transform:scaleX(0.9961);transform-origin:left 0;">Eigene Zusage</div>
<div class="t" style="left:1034.92px;top:415.00px;font-size:19.5px;line-height:19.5px;transform:scaleX(1.0400);transform-origin:left 0;">LSV</div>
<div class="t" style="left:1541.32px;top:415.00px;font-size:19.5px;line-height:19.5px;transform:scaleX(1.0400);transform-origin:left 0;">LSV</div>
<div class="t" style="left:1898.25px;top:415.00px;font-size:19.5px;line-height:19.5px;transform:scaleX(0.9750);transform-origin:left 0;">0</div>
<div class="r" style="left:322px;top:603px;width:1597px;height:401px;background:#fff;border:1px solid #a0a0a0;border-bottom:3px solid #a8a8a8;border-right:none;border-top-left-radius:4px"></div>
<div class="r" style="left:322px;top:626px;width:3px;height:378px;background:#a8a8a8"></div>
<div class="r" style="left:1917px;top:626px;width:2px;height:378px;background:#a8a8a8"></div>
<div class="r" style="left:323px;top:604px;width:1596px;height:23px;background:#f5f5f5"></div>
<div class="r" style="left:323px;top:626px;width:1596px;height:3px;background:#a8a8a8"></div>
<div class="r" style="left:323px;top:604px;width:189px;height:23px;background:linear-gradient(#f6f6f6,#e4e4e4 40%,#b4b4b4);border-right:1px solid #bcbcbc"></div>
<div class="t" style="left:326.20px;top:610.00px;font-size:12.0px;line-height:12.0px;">*Position Zusagenfakturierung</div>
<svg class="r" style="left:496px;top:611px;" width="9" height="9" viewBox="0 0 9 9"><path d="M0.5 0.5 L8.5 8.5 M8.5 0.5 L0.5 8.5" stroke="#333" stroke-width="1.1"/></svg>
<div class="r" style="left:512px;top:605px;width:71px;height:21px;background:#f4f4f4;border-right:1px solid #b0b0b0"></div>
<div class="t" style="left:515.98px;top:610.00px;font-size:12.0px;line-height:12.0px;color:#1f4b68;transform:scaleX(1.0233);transform-origin:left 0;">Dokumente</div>
<div class="r" style="left:583px;top:605px;width:188px;height:21px;background:#f4f4f4;border-right:1px solid #b0b0b0"></div>
<div class="t" style="left:586.52px;top:610.00px;font-size:12px;line-height:12px;color:#1f4b68;transform:scaleX(0.9809);transform-origin:left 0;">Personen zur Zusagenfakturierung</div>
<svg class="r" style="left:1855px;top:608px;" width="6" height="15" viewBox="0 0 6 15"><g fill="none" stroke="#555" stroke-width="1"><circle cx="3" cy="2.6" r="1.7"/><circle cx="3" cy="7.5" r="1.7"/><circle cx="3" cy="12.3" r="1.7"/></g></svg>
<div class="r" style="left:1876px;top:609px;width:10px;height:4px;border:1px solid #555;background:#fff"></div>
<svg class="r" style="left:1899px;top:609px;" width="11" height="11" viewBox="0 0 11 11"><rect x="0.5" y="0.5" width="9" height="9" fill="#fff" stroke="#555"/><path d="M0.5 2.5 H9.5" stroke="#555"/></svg>
<div class="t" style="left:345.70px;top:631.00px;font-size:19.6px;line-height:19.6px;font-weight:bold;">10</div>
<div class="t" style="left:1123.30px;top:631.00px;font-size:19.5px;line-height:19.5px;transform:scaleX(0.9750);transform-origin:left 0;">Typ:</div>
<div class="t" style="left:1163.01px;top:631.00px;font-size:19.6px;line-height:19.6px;font-weight:bold;transform:scaleX(0.9891);transform-origin:left 0;">Eigene Zusage</div>
<div class="t" style="left:1311.60px;top:631.00px;font-size:19.3px;line-height:19.3px;font-style:italic;transform:scaleX(1.0145);transform-origin:left 0;">Zusage:</div>
<div class="r" style="left:330px;top:661px;width:1583px;height:153px;border:1px solid #e0e0e0"></div>
<div class="r" style="left:335px;top:658px;width:58px;height:6px;background:#fff"></div>
<div class="t" style="left:337.56px;top:656.00px;font-size:12.0px;line-height:12.0px;transform:scaleX(0.9364);transform-origin:left 0;">Ereignisse</div>
<div class="r" style="left:336px;top:668px;width:1570px;height:144px;background:#ebebeb;border:1px solid #a8a8b0"></div>
<div class="r" style="left:337px;top:669px;width:1568px;height:27px;background:#fff"></div>
<div class="r" style="left:581px;top:669px;width:1px;height:27px;background:#e8e8e8"></div>
<div class="r" style="left:582px;top:721px;width:1px;height:90px;background:#e2e2e2"></div>
<div class="r" style="left:882px;top:669px;width:1px;height:27px;background:#e8e8e8"></div>
<div class="r" style="left:883px;top:721px;width:1px;height:90px;background:#e2e2e2"></div>
<div class="r" style="left:1154px;top:669px;width:1px;height:27px;background:#e8e8e8"></div>
<div class="r" style="left:1155px;top:721px;width:1px;height:90px;background:#e2e2e2"></div>
<div class="r" style="left:1321px;top:669px;width:1px;height:27px;background:#e8e8e8"></div>
<div class="r" style="left:1322px;top:721px;width:1px;height:90px;background:#e2e2e2"></div>
<div class="r" style="left:1594px;top:669px;width:1px;height:27px;background:#e8e8e8"></div>
<div class="r" style="left:1595px;top:721px;width:1px;height:90px;background:#e2e2e2"></div>
<div class="r" style="left:1760px;top:669px;width:1px;height:27px;background:#e8e8e8"></div>
<div class="r" style="left:1761px;top:721px;width:1px;height:90px;background:#e2e2e2"></div>
<div class="r" style="left:1901px;top:669px;width:1px;height:27px;background:#e8e8e8"></div>
<div class="r" style="left:337px;top:747px;width:1568px;height:1px;background:#e4e4e4"></div>
<div class="r" style="left:337px;top:773px;width:1568px;height:1px;background:#e4e4e4"></div>
<div class="r" style="left:337px;top:799px;width:1568px;height:1px;background:#e4e4e4"></div>
<div class="t" style="left:344.30px;top:674.00px;font-size:19.5px;line-height:19.5px;transform:scaleX(0.9766);transform-origin:left 0;">Verwendung</div>
<svg class="r" style="left:455px;top:669px;" width="9" height="5" viewBox="0 0 9 5"><path d="M0.5 4.5 L4.5 0.5 L8.5 4.5" fill="none" stroke="#666" stroke-width="0.9"/></svg>
<div class="t" style="left:587.03px;top:674.00px;font-size:19.5px;line-height:19.5px;transform:scaleX(0.9853);transform-origin:left 0;">Ereignis</div>
<div class="t" style="left:887.71px;top:674.00px;font-size:19.5px;line-height:19.5px;transform:scaleX(0.9957);transform-origin:left 0;">Beschreibung</div>
<div class="t" style="left:1159.71px;top:674.00px;font-size:19.5px;line-height:19.5px;transform:scaleX(0.9926);transform-origin:left 0;">Ereignisposition</div>
<div class="t" style="left:1326.81px;top:674.00px;font-size:19.5px;line-height:19.5px;transform:scaleX(0.9957);transform-origin:left 0;">Beschreibung</div>
<div class="t" style="left:1600.04px;top:674.00px;font-size:19.5px;line-height:19.5px;transform:scaleX(0.9556);transform-origin:left 0;">Status</div>
<div class="t" style="left:1765.77px;top:674.00px;font-size:19.5px;line-height:19.5px;transform:scaleX(0.9638);transform-origin:left 0;">Kanal</div>
<div class="r" style="left:337px;top:696px;width:1568px;height:25px;background:#c6c6c6"></div>
<div class="r" style="left:342px;top:696px;width:221px;height:25px;background:#fff"></div>
<div class="r" style="left:339px;top:696px;width:3px;height:25px;background:#9a9a9a"></div>
<div class="r" style="left:342px;top:696px;width:1px;height:25px;background:#2a6fc0"></div>
<div class="r" style="left:563px;top:696px;width:19px;height:25px;background:#cce4f7"></div>
<div class="r" style="left:581px;top:696px;width:1px;height:25px;background:#2a6fc0"></div>
<svg class="r" style="left:567px;top:706px;" width="10" height="6" viewBox="0 0 10 6"><path d="M0.8 0.8 L5 5 L9.2 0.8" fill="none" stroke="#444" stroke-width="1"/></svg>
<div class="r" style="left:582px;top:696px;width:300px;height:25px;background:#fff"></div>
<div class="r" style="left:1155px;top:696px;width:166px;height:25px;background:#fff"></div>
<div class="r" style="left:1595px;top:696px;width:165px;height:25px;background:#fff"></div>
<div class="r" style="left:867px;top:696px;width:16px;height:25px;background:#e9e9e9"></div>
<svg class="r" style="left:868px;top:701px;" width="15" height="13" viewBox="0 0 15 13"><rect x="0.5" y="0.5" width="13" height="12" fill="#fff" stroke="#7a7a7a"/><rect x="0.5" y="0.5" width="13" height="2.6" fill="#8a8a8a"/><path d="M0.5 5.8 H13.5 M0.5 9 H13.5 M4.8 3 V12.5 M9.2 3 V12.5" stroke="#999" stroke-width="0.9"/><path d="M14 1.5 V13 H1.5" fill="none" stroke="#aaa" stroke-width="1"/></svg>
<div class="r" style="left:1306px;top:696px;width:16px;height:25px;background:#e9e9e9"></div>
<svg class="r" style="left:1307px;top:701px;" width="15" height="13" viewBox="0 0 15 13"><rect x="0.5" y="0.5" width="13" height="12" fill="#fff" stroke="#7a7a7a"/><rect x="0.5" y="0.5" width="13" height="2.6" fill="#8a8a8a"/><path d="M0.5 5.8 H13.5 M0.5 9 H13.5 M4.8 3 V12.5 M9.2 3 V12.5" stroke="#999" stroke-width="0.9"/><path d="M14 1.5 V13 H1.5" fill="none" stroke="#aaa" stroke-width="1"/></svg>
<div class="r" style="left:1745px;top:696px;width:16px;height:25px;background:#e9e9e9"></div>
<svg class="r" style="left:1746px;top:701px;" width="15" height="13" viewBox="0 0 15 13"><rect x="0.5" y="0.5" width="13" height="12" fill="#fff" stroke="#7a7a7a"/><rect x="0.5" y="0.5" width="13" height="2.6" fill="#8a8a8a"/><path d="M0.5 5.8 H13.5 M0.5 9 H13.5 M4.8 3 V12.5 M9.2 3 V12.5" stroke="#999" stroke-width="0.9"/><path d="M14 1.5 V13 H1.5" fill="none" stroke="#aaa" stroke-width="1"/></svg>
<div class="r" style="left:883px;top:696px;width:1px;height:25px;background:#f0f0f0"></div>
<div class="r" style="left:1322px;top:696px;width:1px;height:25px;background:#f0f0f0"></div>
<div class="r" style="left:1761px;top:696px;width:1px;height:25px;background:#f0f0f0"></div>
<div class="r" style="left:330px;top:824px;width:1583px;height:153px;border:1px solid #e0e0e0"></div>
<div class="r" style="left:336px;top:831px;width:1570px;height:144px;background:#fff;border:1px solid #a8a8b0"></div>
<div class="r" style="left:337px;top:859px;width:268px;height:115px;background:#f4f4f4"></div>
<div class="r" style="left:604px;top:832px;width:1px;height:27px;background:#e8e8e8"></div>
<div class="r" style="left:604px;top:859px;width:1px;height:115px;background:#ececec"></div>
<div class="r" style="left:791px;top:832px;width:1px;height:27px;background:#e8e8e8"></div>
<div class="r" style="left:791px;top:859px;width:1px;height:115px;background:#ececec"></div>
<div class="r" style="left:885px;top:832px;width:1px;height:27px;background:#e8e8e8"></div>
<div class="r" style="left:885px;top:859px;width:1px;height:115px;background:#ececec"></div>
<div class="r" style="left:1148px;top:832px;width:1px;height:27px;background:#e8e8e8"></div>
<div class="r" style="left:1148px;top:859px;width:1px;height:115px;background:#ececec"></div>
<div class="r" style="left:1549px;top:832px;width:1px;height:27px;background:#e8e8e8"></div>
<div class="r" style="left:1549px;top:859px;width:1px;height:115px;background:#ececec"></div>
<div class="r" style="left:1690px;top:832px;width:1px;height:27px;background:#e8e8e8"></div>
<div class="r" style="left:1690px;top:859px;width:1px;height:115px;background:#ececec"></div>
<div class="r" style="left:1765px;top:832px;width:1px;height:27px;background:#e8e8e8"></div>
<div class="r" style="left:1765px;top:859px;width:1px;height:115px;background:#ececec"></div>
<div class="r" style="left:1903px;top:832px;width:1px;height:27px;background:#e8e8e8"></div>
<div class="r" style="left:1903px;top:859px;width:1px;height:115px;background:#ececec"></div>
<div class="r" style="left:337px;top:884px;width:1568px;height:1px;background:#ececec"></div>
<div class="r" style="left:337px;top:910px;width:1568px;height:1px;background:#ececec"></div>
<div class="r" style="left:337px;top:936px;width:1568px;height:1px;background:#ececec"></div>
<div class="r" style="left:337px;top:962px;width:1568px;height:1px;background:#ececec"></div>
<div class="t" style="left:609.94px;top:837.00px;font-size:19.5px;line-height:19.5px;transform:scaleX(0.9818);transform-origin:left 0;">Exportformat</div>
<div class="t" style="left:798.00px;top:837.00px;font-size:19.5px;line-height:19.5px;transform:scaleX(0.9718);transform-origin:left 0;">Versand</div>
<div class="t" style="left:890.70px;top:837.00px;font-size:19.5px;line-height:19.5px;">Empfänger</div>
<div class="t" style="left:1153.60px;top:837.00px;font-size:19.5px;line-height:19.5px;">Exportdatei</div>
<div class="t" style="left:1554.74px;top:837.00px;font-size:19.5px;line-height:19.5px;transform:scaleX(0.9803);transform-origin:left 0;">Drucker</div>
<div class="t" style="left:1705.30px;top:837.00px;font-size:19.5px;line-height:19.5px;transform:scaleX(0.9518);transform-origin:left 0;">Textnr.</div>
<div class="t" style="left:1777.82px;top:837.00px;font-size:19.5px;line-height:19.5px;transform:scaleX(0.9752);transform-origin:left 0;">Zahlungsverb.</div>
<div class="t" style="left:339.00px;top:820.00px;font-size:12.0px;line-height:12.0px;">Co</div>
<div class="t" style="left:328.03px;top:981.00px;font-size:19.5px;line-height:19.5px;transform:scaleX(0.9871);transform-origin:left 0;">Dokumentencode:</div>
<div class="t" style="left:661.04px;top:981.00px;font-size:19.5px;line-height:19.5px;transform:scaleX(0.9781);transform-origin:left 0;">Datum auf Brief:</div>
<div class="t" style="left:912.50px;top:981.00px;font-size:19.5px;line-height:19.5px;transform:scaleX(0.9851);transform-origin:left 0;">Anrede:</div>
<div class="t" style="left:983.49px;top:981.00px;font-size:19.6px;line-height:19.6px;font-weight:bold;transform:scaleX(1.0084);transform-origin:left 0;">Einzelanrede</div>
<div class="t" style="left:1152.30px;top:981.00px;font-size:19.5px;line-height:19.5px;transform:scaleX(0.9839);transform-origin:left 0;">Anredeset:</div>
<div class="r" style="left:342px;top:723px;width:240px;height:135px;background:#fff;border:1px solid #1e7ad6;box-shadow:3px 3px 3px rgba(0,0,0,0.35)"></div>
<div class="r" style="left:343px;top:725px;width:238px;height:22px;background:#0078d7;outline:1px dotted #c0d8f0;outline-offset:-1px"></div>
<div class="t" style="left:345.70px;top:727.00px;font-size:19.6px;line-height:19.6px;font-weight:bold;color:#fff;">Zusage</div>
<div class="t" style="left:344.70px;top:749.00px;font-size:19.6px;line-height:19.6px;font-weight:bold;">Spende</div>
<div class="t" style="left:344.70px;top:771.00px;font-size:19.6px;line-height:19.6px;font-weight:bold;">Spende (Beschenkte)</div>
<div class="t" style="left:344.70px;top:793.00px;font-size:19.6px;line-height:19.6px;font-weight:bold;">sonstiges</div>
<div class="t" style="left:344.70px;top:815.00px;font-size:19.6px;line-height:19.6px;font-weight:bold;">sonstiges (Beschenkte)</div>
<div class="t" style="left:344.70px;top:837.00px;font-size:19.6px;line-height:19.6px;font-weight:bold;">Austritt</div>
<div class="r" style="left:0px;top:1003px;width:1919px;height:27px;background:#f0f0f0"></div>
<svg class="r" style="left:1775px;top:1011px;" width="2" height="14" viewBox="0 0 2 14"><rect x="0" y="0" width="1.5" height="1.5" fill="#a89878"/><rect x="0" y="3" width="1.5" height="1.5" fill="#a89878"/><rect x="0" y="6" width="1.5" height="1.5" fill="#a89878"/><rect x="0" y="9" width="1.5" height="1.5" fill="#a89878"/><rect x="0" y="12" width="1.5" height="1.5" fill="#a89878"/></svg>
<div class="t" style="left:1781.00px;top:1009.00px;font-size:18.7px;line-height:18.7px;">Standard / kli</div>
<svg class="r" style="left:1893px;top:1011px;" width="2" height="14" viewBox="0 0 2 14"><rect x="0" y="0" width="1.5" height="1.5" fill="#a89878"/><rect x="0" y="3" width="1.5" height="1.5" fill="#a89878"/><rect x="0" y="6" width="1.5" height="1.5" fill="#a89878"/><rect x="0" y="9" width="1.5" height="1.5" fill="#a89878"/><rect x="0" y="12" width="1.5" height="1.5" fill="#a89878"/></svg>
<svg class="r" style="left:1901px;top:1011px;" width="14" height="14" viewBox="0 0 14 14"><circle cx="7" cy="7" r="6.2" fill="none" stroke="#111" stroke-width="1.3"/><rect x="6.2" y="5.5" width="1.7" height="5" fill="#111"/><rect x="6.2" y="3" width="1.7" height="1.6" fill="#111"/></svg>
</body></html>
